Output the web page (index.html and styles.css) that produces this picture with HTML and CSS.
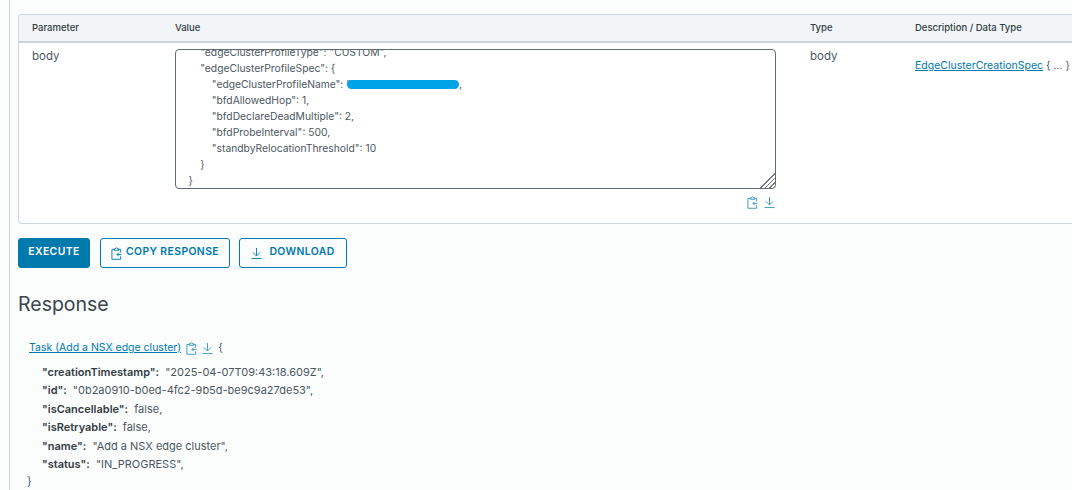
FILE: index.html
```html
<!DOCTYPE html>
<html lang="en">
<head>
<meta charset="utf-8">
<title>Execute</title>
<link rel="stylesheet" href="styles.css">
</head>
<body>
<svg class="defs" width="0" height="0" aria-hidden="true">
  <symbol id="clip" viewBox="0 0 12 14">
    <path d="M3.5 2.5H1v10.8h9.5V10M8 2.5h2.5V6" fill="none" stroke="currentColor"/>
    <path d="M3.5 3.5V2h1.3a1.2 1.2 0 0 1 2.4 0H8.5v1.5z" fill="none" stroke="currentColor"/>
    <path d="M11.5 8H6.5M8.5 6L6.5 8l2 2" fill="none" stroke="currentColor"/>
  </symbol>
  <symbol id="down" viewBox="0 0 12 13">
    <path d="M6 0.5V9M2 5.2L6 9.2l4-4M0.5 12h11" fill="none" stroke="currentColor"/>
  </symbol>
</svg>
<main class="page">
  <section class="table">
    <div class="row head">
      <div class="c-param">Parameter</div>
      <div class="c-value">Value</div>
      <div class="c-type">Type</div>
      <div class="c-desc">Description / Data Type</div>
    </div>
    <div class="row body-row">
      <div class="c-param cell-text">body</div>
      <div class="c-value">
        <div class="editor">
<pre class="code">    "edgeClusterProfileType": "CUSTOM",
    "edgeClusterProfileSpec": {
        "edgeClusterProfileName": "<span class="masked"></span>,
        "bfdAllowedHop": 1,
        "bfdDeclareDeadMultiple": 2,
        "bfdProbeInterval": 500,
        "standbyRelocationThreshold": 10
    }
}</pre>
          <span class="grip"></span>
        </div>
        <div class="editor-tools">
          <svg class="ico"><use href="#clip"/></svg>
          <svg class="ico"><use href="#down"/></svg>
        </div>
      </div>
      <div class="c-type cell-text">body</div>
      <div class="c-desc cell-desc"><a href="#">EdgeClusterCreationSpec</a> { ... }</div>
    </div>
  </section>
  <div class="actions">
    <button class="btn primary">EXECUTE</button>
    <button class="btn copy"><svg class="ico"><use href="#clip"/></svg>COPY RESPONSE</button>
    <button class="btn wide"><svg class="ico"><use href="#down"/></svg>DOWNLOAD</button>
  </div>
  <h2 class="title">Response</h2>
  <div class="resp">
    <div class="resp-head"><a href="#">Task (Add a NSX edge cluster)</a><svg class="ico"><use href="#clip"/></svg><svg class="ico"><use href="#down"/></svg><span>{</span></div>
    <div class="prop"><b>"creationTimestamp":</b> "2025-04-07T09:43:18.609Z",</div>
    <div class="prop"><b>"id":</b> "0b2a0910-b0ed-4fc2-9b5d-be9c9a27de53",</div>
    <div class="prop"><b>"isCancellable":</b> false,</div>
    <div class="prop"><b>"isRetryable":</b> false,</div>
    <div class="prop"><b>"name":</b> "Add a NSX edge cluster",</div>
    <div class="prop"><b>"status":</b> "IN_PROGRESS",</div>
    <div class="close">}</div>
  </div>
</main>
</body>
</html>
```
FILE: styles.css
```css
* { box-sizing: border-box; }
html, body { margin: 0; height: 490px; overflow: hidden; }
body { background: #fbfdfd; color: #4c575e; font: 11px/16px Inter, sans-serif; }
.defs { position: absolute; }
.page { margin-left: 9px; height: 490px; width: 1063px; border-left: 1px solid #cdd3d7; padding: 14px 0 0 8px; overflow: hidden; }
.table { width: 1054px; height: 210px; background: #fff; border: 1px solid #ccd6dc; border-right: 0; border-radius: 4px 0 0 4px; }
.row { display: grid; grid-template-columns: 143px 635px 105px 1fr; padding-left: 13px; }
.head { height: 28px; background: #f1f5f8; border-bottom: 2px solid #cbd4db; border-radius: 3px 0 0 0; align-items: center; font-size: 9.5px; font-weight: 500; color: #333c42; }
.body-row { padding-top: 6px; }
.cell-text { font-size: 11.5px; margin-top: -1px; }
.cell-desc { padding-top: 9px; font-size: 10.5px; white-space: nowrap; overflow: hidden; }
a { color: #0079ad; text-decoration: underline; }
.editor { position: relative; width: 601px; height: 140px; border: 1px solid #5f6e76; border-radius: 4px; background: #fff; overflow: hidden; }
.code { margin: -6px 0 0 12.6px; font: 10.3px/16px Inter, sans-serif; color: #4c575e; }
.masked { display: inline-block; width: 112px; height: 9px; margin-left: -4px; vertical-align: -1px; background: #00a4e6; border-radius: 5px; }
.grip { position: absolute; right: 0; bottom: 0; width: 16px; height: 16px; background: repeating-linear-gradient(135deg, #6f7a80 0 1.2px, #fff 1.2px 3px); clip-path: polygon(100% 0, 100% 100%, 0 100%); }
.editor-tools { display: flex; justify-content: flex-end; gap: 6px; width: 601px; padding: 7px 1px 0 0; color: #3a94bd; }
.ico { width: 11px; height: 13px; flex: none; }
.actions { display: flex; gap: 9px; margin-top: 14px; }
.btn { display: inline-flex; align-items: center; justify-content: center; gap: 5px; height: 30px; width: 130px; padding: 0 0 2px; background: transparent; border: 1px solid #0079ad; border-radius: 3px; color: #0079ad; font: 600 10.4px/1 Inter, sans-serif; letter-spacing: .4px; }
.btn .ico { margin-top: 3px; }
.copy { gap: 4px; }
.primary { width: 72px; margin-right: 1px; background: #0079ad; color: #fff; }
.wide { width: 108px; gap: 7px; }
.title { margin: 24px 0 0; font: 400 19.5px/24px Inter, sans-serif; color: #3a454c; }
.resp { margin-top: 23px; padding-left: 9px; font-size: 11px; line-height: 18.4px; }
.resp-head { display: flex; align-items: center; gap: 5px; height: 18px; margin: 0 0 6px 2px; font-size: 10.5px; color: #4c575e; }
.resp-head .ico { color: #3a94bd; }
.prop { padding-left: 15px; }
.prop b { font-weight: 600; margin-right: 3px; color: #333c42; }
.close { margin-top: -1px; }
```
